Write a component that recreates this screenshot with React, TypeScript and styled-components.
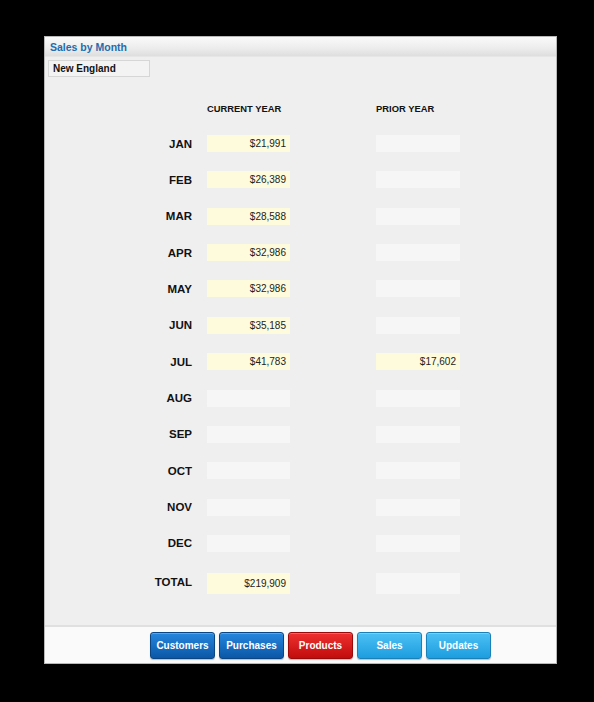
import React from "react";
import styled, { createGlobalStyle } from "styled-components";

const Global = createGlobalStyle`
  html, body { margin: 0; padding: 0; background: #000; }
  body { font-family: "Liberation Sans", Arial, sans-serif; }
`;

const Page = styled.div`
  width: 594px;
  height: 702px;
  background: #000;
  padding: 36px 37px 0 44px;
  box-sizing: border-box;
`;

const Panel = styled.div`
  width: 513px;
  height: 628px;
  display: flex;
  flex-direction: column;
  background: #efefef;
  border: 1px solid #b8b8b8;
  box-sizing: border-box;
`;

const Header = styled.div`
  height: 19px;
  flex: none;
  display: flex;
  align-items: center;
  padding-left: 5px;
  background: linear-gradient(#fafafa, #ececec 60%, #dedede);
  border-bottom: 1px solid #e6e6e6;
`;

const Title = styled.span`
  font-size: 10.5px;
  font-weight: bold;
  color: #1f6cae;
`;

const Body = styled.div`
  flex: 1;
  padding: 3px 0 0 3px;
  display: flex;
  flex-direction: column;
`;

const Region = styled.div`
  width: 102px;
  height: 17px;
  box-sizing: border-box;
  border: 1px solid #d6d6d6;
  background: #f3f3f3;
  font-size: 10px;
  font-weight: bold;
  color: #111;
  display: flex;
  align-items: center;
  padding-left: 4px;
`;

const Table = styled.div`
  display: flex;
  flex-direction: column;
  margin-left: -3px;
`;

const Row = styled.div<{ $top: number; $h: number; $align?: string }>`
  display: grid;
  grid-template-columns: 162px 169px 84px;
  height: ${(p) => p.$h}px;
  margin-top: ${(p) => p.$top}px;
  align-items: ${(p) => p.$align || "center"};
`;

const ColHead = styled.div`
  font-size: 9.4px;
  font-weight: bold;
  color: #111;
`;

const Label = styled.div<{ $pt?: number }>`
  text-align: right;
  padding-right: 15px;
  padding-top: ${(p) => p.$pt || 0}px;
  font-size: 11.5px;
  font-weight: bold;
  color: #111;
`;

const Cell = styled.div<{ $filled: boolean; $w: number }>`
  width: ${(p) => p.$w}px;
  height: 100%;
  box-sizing: border-box;
  background: ${(p) => (p.$filled ? "#fefbdd" : "#f6f6f6")};
  font-size: 10px;
  color: #222;
  display: flex;
  align-items: center;
  justify-content: flex-end;
  padding-right: 4px;
`;

const Footer = styled.div`
  height: 38px;
  flex: none;
  box-sizing: border-box;
  border-top: 2px solid #e0e0e0;
  background: #fafafa;
  display: flex;
  align-items: flex-start;
  padding: 5px 0 0 105px;
  gap: 4px;
`;

const palettes = {
  dark: { top: "#2587de", bottom: "#0b57a6", border: "#0a4684" },
  red: { top: "#ee3030", bottom: "#c20c0c", border: "#9a0a0a" },
  light: { top: "#4cc0f4", bottom: "#1d9ddf", border: "#1a80b8" },
};

const NavButton = styled.button<{ $tone: keyof typeof palettes }>`
  width: 65px;
  height: 27px;
  box-sizing: border-box;
  border: 1px solid ${(p) => palettes[p.$tone].border};
  border-radius: 3px;
  background: linear-gradient(${(p) => palettes[p.$tone].top}, ${(p) => palettes[p.$tone].bottom});
  box-shadow: inset 0 1px 0 rgba(255,255,255,0.25), 0 1px 1px rgba(0,0,0,0.25);
  color: #fff;
  font-family: "Liberation Sans", Arial, sans-serif;
  font-size: 10px;
  font-weight: bold;
  padding: 0;
  cursor: pointer;
`;

const months: [string, string, string][] = [
  ["JAN", "$21,991", ""],
  ["FEB", "$26,389", ""],
  ["MAR", "$28,588", ""],
  ["APR", "$32,986", ""],
  ["MAY", "$32,986", ""],
  ["JUN", "$35,185", ""],
  ["JUL", "$41,783", "$17,602"],
  ["AUG", "", ""],
  ["SEP", "", ""],
  ["OCT", "", ""],
  ["NOV", "", ""],
  ["DEC", "", ""],
];

const buttons: [string, keyof typeof palettes][] = [
  ["Customers", "dark"],
  ["Purchases", "dark"],
  ["Products", "red"],
  ["Sales", "light"],
  ["Updates", "light"],
];

export default function App() {
  return (
    <Page>
      <Global />
      <Panel>
        <Header>
          <Title>Sales by Month</Title>
        </Header>
        <Body>
          <Region>New England</Region>
          <Table>
            <Row $top={26} $h={11}>
              <div />
              <ColHead>CURRENT YEAR</ColHead>
              <ColHead>PRIOR YEAR</ColHead>
            </Row>
            {months.map(([m, cur, prior], i) => (
              <Row key={m} $top={i === 0 ? 21 : 19.36} $h={17}>
                <Label>{m}</Label>
                <Cell $filled={!!cur} $w={83}>{cur}</Cell>
                <Cell $filled={!!prior} $w={84}>{prior}</Cell>
              </Row>
            ))}
            <Row $top={21} $h={21} $align="stretch">
              <Label $pt={3}>TOTAL</Label>
              <Cell $filled $w={83}>$219,909</Cell>
              <Cell $filled={false} $w={84}></Cell>
            </Row>
          </Table>
        </Body>
        <Footer>
          {buttons.map(([t, tone]) => (
            <NavButton key={t} $tone={tone}>{t}</NavButton>
          ))}
        </Footer>
      </Panel>
    </Page>
  );
}
